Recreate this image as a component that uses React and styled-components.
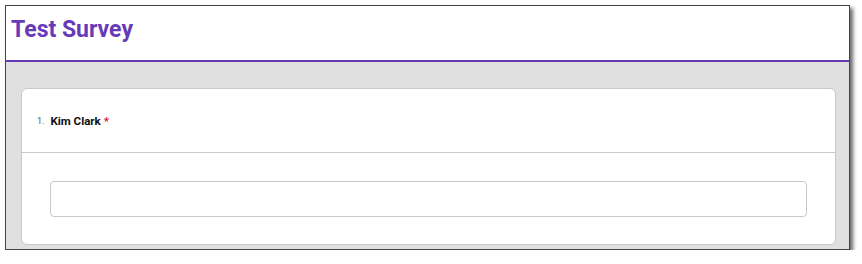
import * as React from "react"
import styled, { createGlobalStyle } from "styled-components"

const GlobalStyle = createGlobalStyle`
    html, body {
        margin: 0;
        padding: 0;
        background: white;
        font-family: Roboto, "Liberation Sans", sans-serif;
    }
`;

const Frame = styled.div`
    margin: 5px 0 0 5px;
    width: 843px;
    height: 243px;
    border: 1px solid #444;
    box-shadow: 3px 3px 4px rgba(0, 0, 0, 0.6);
    display: flex;
    flex-direction: column;
    background: #e0e0e0;
`;

const Header = styled.div`
    height: 54px;
    background: white;
    border-bottom: 2px solid #673ab7;
    display: flex;
    align-items: center;
    padding: 0 5px;
    flex-shrink: 0;
`;

const Title = styled.h1`
    margin: 0 0 8px 0;
    font-size: 23px;
    font-weight: 700;
    color: #673ab7;
`;

const Body = styled.div`
    flex: 1;
    padding: 26px 13px 4px 15px;
    display: flex;
    flex-direction: column;
`;

const Card = styled.div`
    flex: 1;
    background: white;
    border: 1px solid #c8c8c8;
    border-radius: 6px;
    display: flex;
    flex-direction: column;
`;

const QuestionHead = styled.div`
    height: 63px;
    border-bottom: 1px solid #c8c8c8;
    display: flex;
    align-items: center;
    padding: 0 15px;
    gap: 6px;
`;

const Number = styled.span`
    font-size: 9px;
    color: #555;
`;

const Label = styled.span`
    font-size: 11.5px;
    font-weight: 700;
    color: #111;
`;

const Required = styled.span`
    color: #e0133a;
    margin-left: 3px;
`;

const Answer = styled.div`
    flex: 1;
    padding: 28px 28px 0 28px;
`;

const TextInput = styled.input`
    box-sizing: border-box;
    width: 100%;
    height: 36px;
    border: 1px solid #c8c8c8;
    border-radius: 4px;
    outline: none;
    font-family: inherit;
    font-size: 13px;
    padding: 0 10px;
    background: white;
`;

const App = () => {
    return(
        <>
            <GlobalStyle/>
            <Frame>
                <Header>
                    <Title>Test Survey</Title>
                </Header>
                <Body>
                    <Card>
                        <QuestionHead>
                            <Number>1.</Number>
                            <Label>Kim Clark<Required>*</Required></Label>
                        </QuestionHead>
                        <Answer>
                            <TextInput type="text"/>
                        </Answer>
                    </Card>
                </Body>
            </Frame>
        </>
    )
}

export default App;
